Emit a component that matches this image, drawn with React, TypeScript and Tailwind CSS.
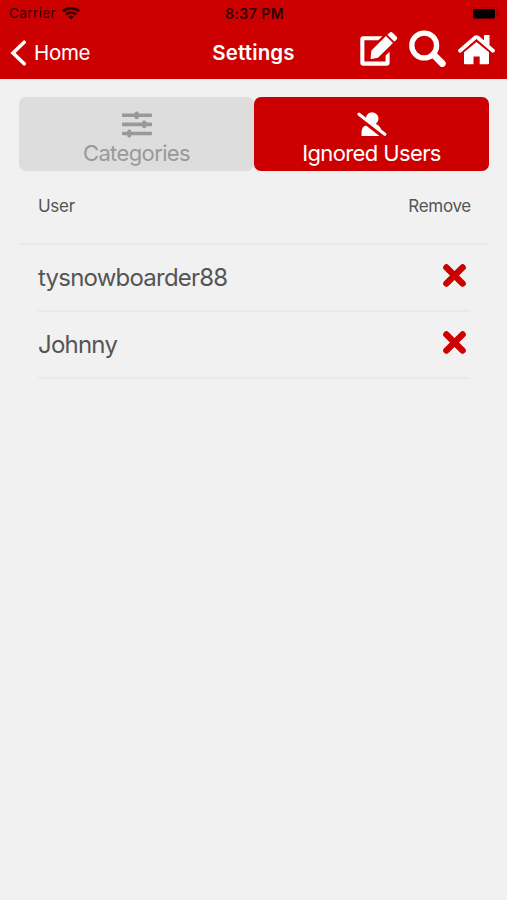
import React, { useState } from "react";

interface IconProps {
  className?: string;
}

const WifiIcon: React.FC<IconProps> = ({ className }) => (
  <svg viewBox="0 0 18 14" className={className} fill="none" stroke="currentColor">
    <path d="M1.1 5.3a11.2 11.2 0 0 1 15.8 0" strokeWidth="2.8" />
    <path d="M4 8.5a7.1 7.1 0 0 1 10 0" strokeWidth="2.5" />
    <path d="M9 13.6 6.2 10.8a4 4 0 0 1 5.6 0z" fill="currentColor" stroke="none" />
  </svg>
);

const BatteryIcon: React.FC<IconProps> = ({ className }) => (
  <svg viewBox="0 0 29 14" className={className}>
    <rect x="0.5" y="0.5" width="25" height="12.5" rx="3.5" fill="none" stroke="#a80000" strokeWidth="1" />
    <rect x="2" y="2" width="22" height="9.5" rx="1.8" fill="#000" />
    <path d="M26.8 4.7c1.7.6 1.7 3.6 0 4.2z" fill="#8a0000" />
  </svg>
);

const EditIcon: React.FC<IconProps> = ({ className }) => (
  <svg viewBox="0 0 38 34" className={className} fill="currentColor">
    <path d="M22.4 4.3 18.3 8.3H4.4v21.300h21.200v-6l4-3.900v11.100a2.900 2.900 0 0 1-2.900 2.900H3.200a2.900 2.900 0 0 1-2.900-2.900V7.200a2.900 2.900 0 0 1 2.900-2.900z" />
    <path d="M26 4 33 11 18 25.800 11.400 27q-.9.1-.8-.8L11.400 18.600z" />
    <path d="M27.400 2.700 29.300.9a2.500 2.500 0 0 1 3.500 0L36.400 4.400a2.400 2.400 0 0 1 0 3.400L34.400 9.700z" />
  </svg>
);

const SearchIcon: React.FC<IconProps> = ({ className }) => (
  <svg viewBox="0 0 38 38" className={className} fill="none" stroke="currentColor">
    <circle cx="15.2" cy="15.5" r="12.4" strokeWidth="5.3" />
    <path d="M24.500 24.700 33.300 33.500" strokeWidth="6.800" strokeLinecap="round" />
  </svg>
);

const HomeIcon: React.FC<IconProps> = ({ className }) => (
  <svg viewBox="0 0 37 31" className={className} fill="currentColor">
    <path
      d="M2 16.700 17 3.700q1.500-1.200 3 0L35 16.700"
      fill="none"
      stroke="currentColor"
      strokeWidth="3.800"
      strokeLinecap="round"
    />
    <path d="M26 1h5.500v13.500l-5.500-4.800z" />
    <path d="M6 18.300 18.500 7.900 31 18.300v11q0 1-1 1h-8.300v-7.800h-6.200v7.800H7q-1 0-1-1z" />
  </svg>
);

const SlidersIcon: React.FC<IconProps> = ({ className }) => (
  <svg viewBox="0 0 30 27" className={className} fill="currentColor">
    <rect y="2.500" width="30" height="3.600" rx="0.800" />
    <rect y="11.600" width="30" height="3.600" rx="0.800" />
    <rect y="20.700" width="30" height="3.600" rx="0.800" />
    <rect x="12.700" y="0.400" width="4" height="7.800" rx="1.700" />
    <rect x="20.200" y="9.500" width="4" height="7.800" rx="1.700" />
    <rect x="5.300" y="18.600" width="4" height="7.800" rx="1.700" />
  </svg>
);

const UserSlashIcon: React.FC<IconProps> = ({ className }) => (
  <svg viewBox="0 0 30 25" className={className} fill="currentColor">
    {/* head, cut off by the slash */}
    <path d="M9 5.500A6.300 6.300 0 1 1 18.700 11.900C21.500 12.800 23.500 14.500 24.500 18.500L9 6.500z" />
    <path d="M9 13.500 22.500 24H4.500v-3.500c0-3.800 1.600-6.300 4.500-7z" />
    <path d="M2 2.200 27.800 22.300" fill="none" stroke="currentColor" strokeWidth="3.200" strokeLinecap="round" />
  </svg>
);

const RemoveIcon: React.FC<IconProps> = ({ className }) => (
  <svg viewBox="0 0 23 23" className={className} fill="none" stroke="currentColor">
    <path d="M3.400 3.400 19.600 19.600M19.600 3.400 3.400 19.600" strokeWidth="6.400" strokeLinecap="round" />
  </svg>
);

const StatusBar: React.FC = () => (
  <div className="grid h-[27px] grid-cols-[1fr_auto_1fr] items-center pl-[9px] pr-[7px] text-[13.500px] text-[#300000]">
    <div className="flex items-center gap-[6px]">
      <span className="tracking-[0.400px]">Carrier</span>
      <WifiIcon className="mb-[1px] h-[14px] w-[18px]" />
    </div>
    <span className="text-center text-[14px] font-semibold tracking-[0.450px]">8:37 PM</span>
    <BatteryIcon className="h-[14px] w-[29px] justify-self-end" />
  </div>
);

const Header: React.FC = () => (
  <header className="h-[79px] bg-[#cc0000]">
    <StatusBar />
    <div className="relative flex h-[52px] items-center justify-between pl-[10px] pr-[12px] text-white">
      <button className="flex items-center gap-[7px] text-[20.500px] tracking-[-0.300px]">
        <svg viewBox="0 0 17 26" className="h-[26px] w-[17px]" fill="none" stroke="currentColor">
          <path d="M14.200 2.200 3 13 14.200 23.800" strokeWidth="3.600" strokeLinecap="round" />
        </svg>
        Home
      </button>
      <h1 className="pointer-events-none absolute inset-x-0 text-center text-[20.500px] font-semibold tracking-[0.150px]">
        Settings
      </h1>
      <div className="flex items-center pb-[8px]">
        <EditIcon className="mr-[11px] h-[34px] w-[38px]" />
        <SearchIcon className="mr-[11px] h-[38px] w-[38px]" />
        <HomeIcon className="h-[31px] w-[37px]" />
      </div>
    </div>
  </header>
);

const App: React.FC = () => {
  const [activeTab, setActiveTab] = useState("ignored");
  const [users, setUsers] = useState(["tysnowboarder88", "Johnny"]);

  const tabs = [
    { key: "categories", label: "Categories", icon: <SlidersIcon className="h-[27px] w-[30px]" /> },
    { key: "ignored", label: "Ignored Users", icon: <UserSlashIcon className="h-[25px] w-[30px]" /> },
  ];

  return (
    <div className="min-h-screen bg-[#f1f1f1] font-['Inter',sans-serif] text-[#555555]">
      <Header />

      {/* Tabs */}
      <div className="ml-[19px] mr-[18px] mt-[18px] grid h-[74px] grid-cols-2">
        {tabs.map((tab) => (
          <button
            key={tab.key}
            onClick={() => setActiveTab(tab.key)}
            className={`flex flex-col items-center rounded-[7px] pt-[14px] text-[22px] tracking-[-0.620px] ${
              activeTab === tab.key ? "bg-[#cc0000] text-white" : "bg-[#dddddd] text-[#999999]"
            }`}
          >
            <span className="flex h-[27px] items-center">{tab.icon}</span>
            <span className="leading-[30px]">{tab.label}</span>
          </button>
        ))}
      </div>

      {/* Ignored users */}
      <div className="ml-[19px] mr-[18px] flex h-[74px] justify-between border-b-2 border-[#e9e9e9] pl-[19px] pr-[18px] pt-[22px] text-[17px] leading-[26px] tracking-[-0.300px]">
        <span>User</span>
        <span>Remove</span>
      </div>
      <ul className="ml-[38px] mr-[37px]">
        {users.map((user) => (
          <li key={user} className="flex h-[67px] items-center justify-between border-b-2 border-[#e9e9e9] pr-[4px]">
            <span className="text-[24px] tracking-[-0.780px]">{user}</span>
            <button
              onClick={() => setUsers(users.filter((u) => u !== user))}
              className="pb-[5px] text-[#cc0000]"
              aria-label="Remove"
            >
              <RemoveIcon className="h-[23px] w-[23px]" />
            </button>
          </li>
        ))}
      </ul>
    </div>
  );
};

export default App;
